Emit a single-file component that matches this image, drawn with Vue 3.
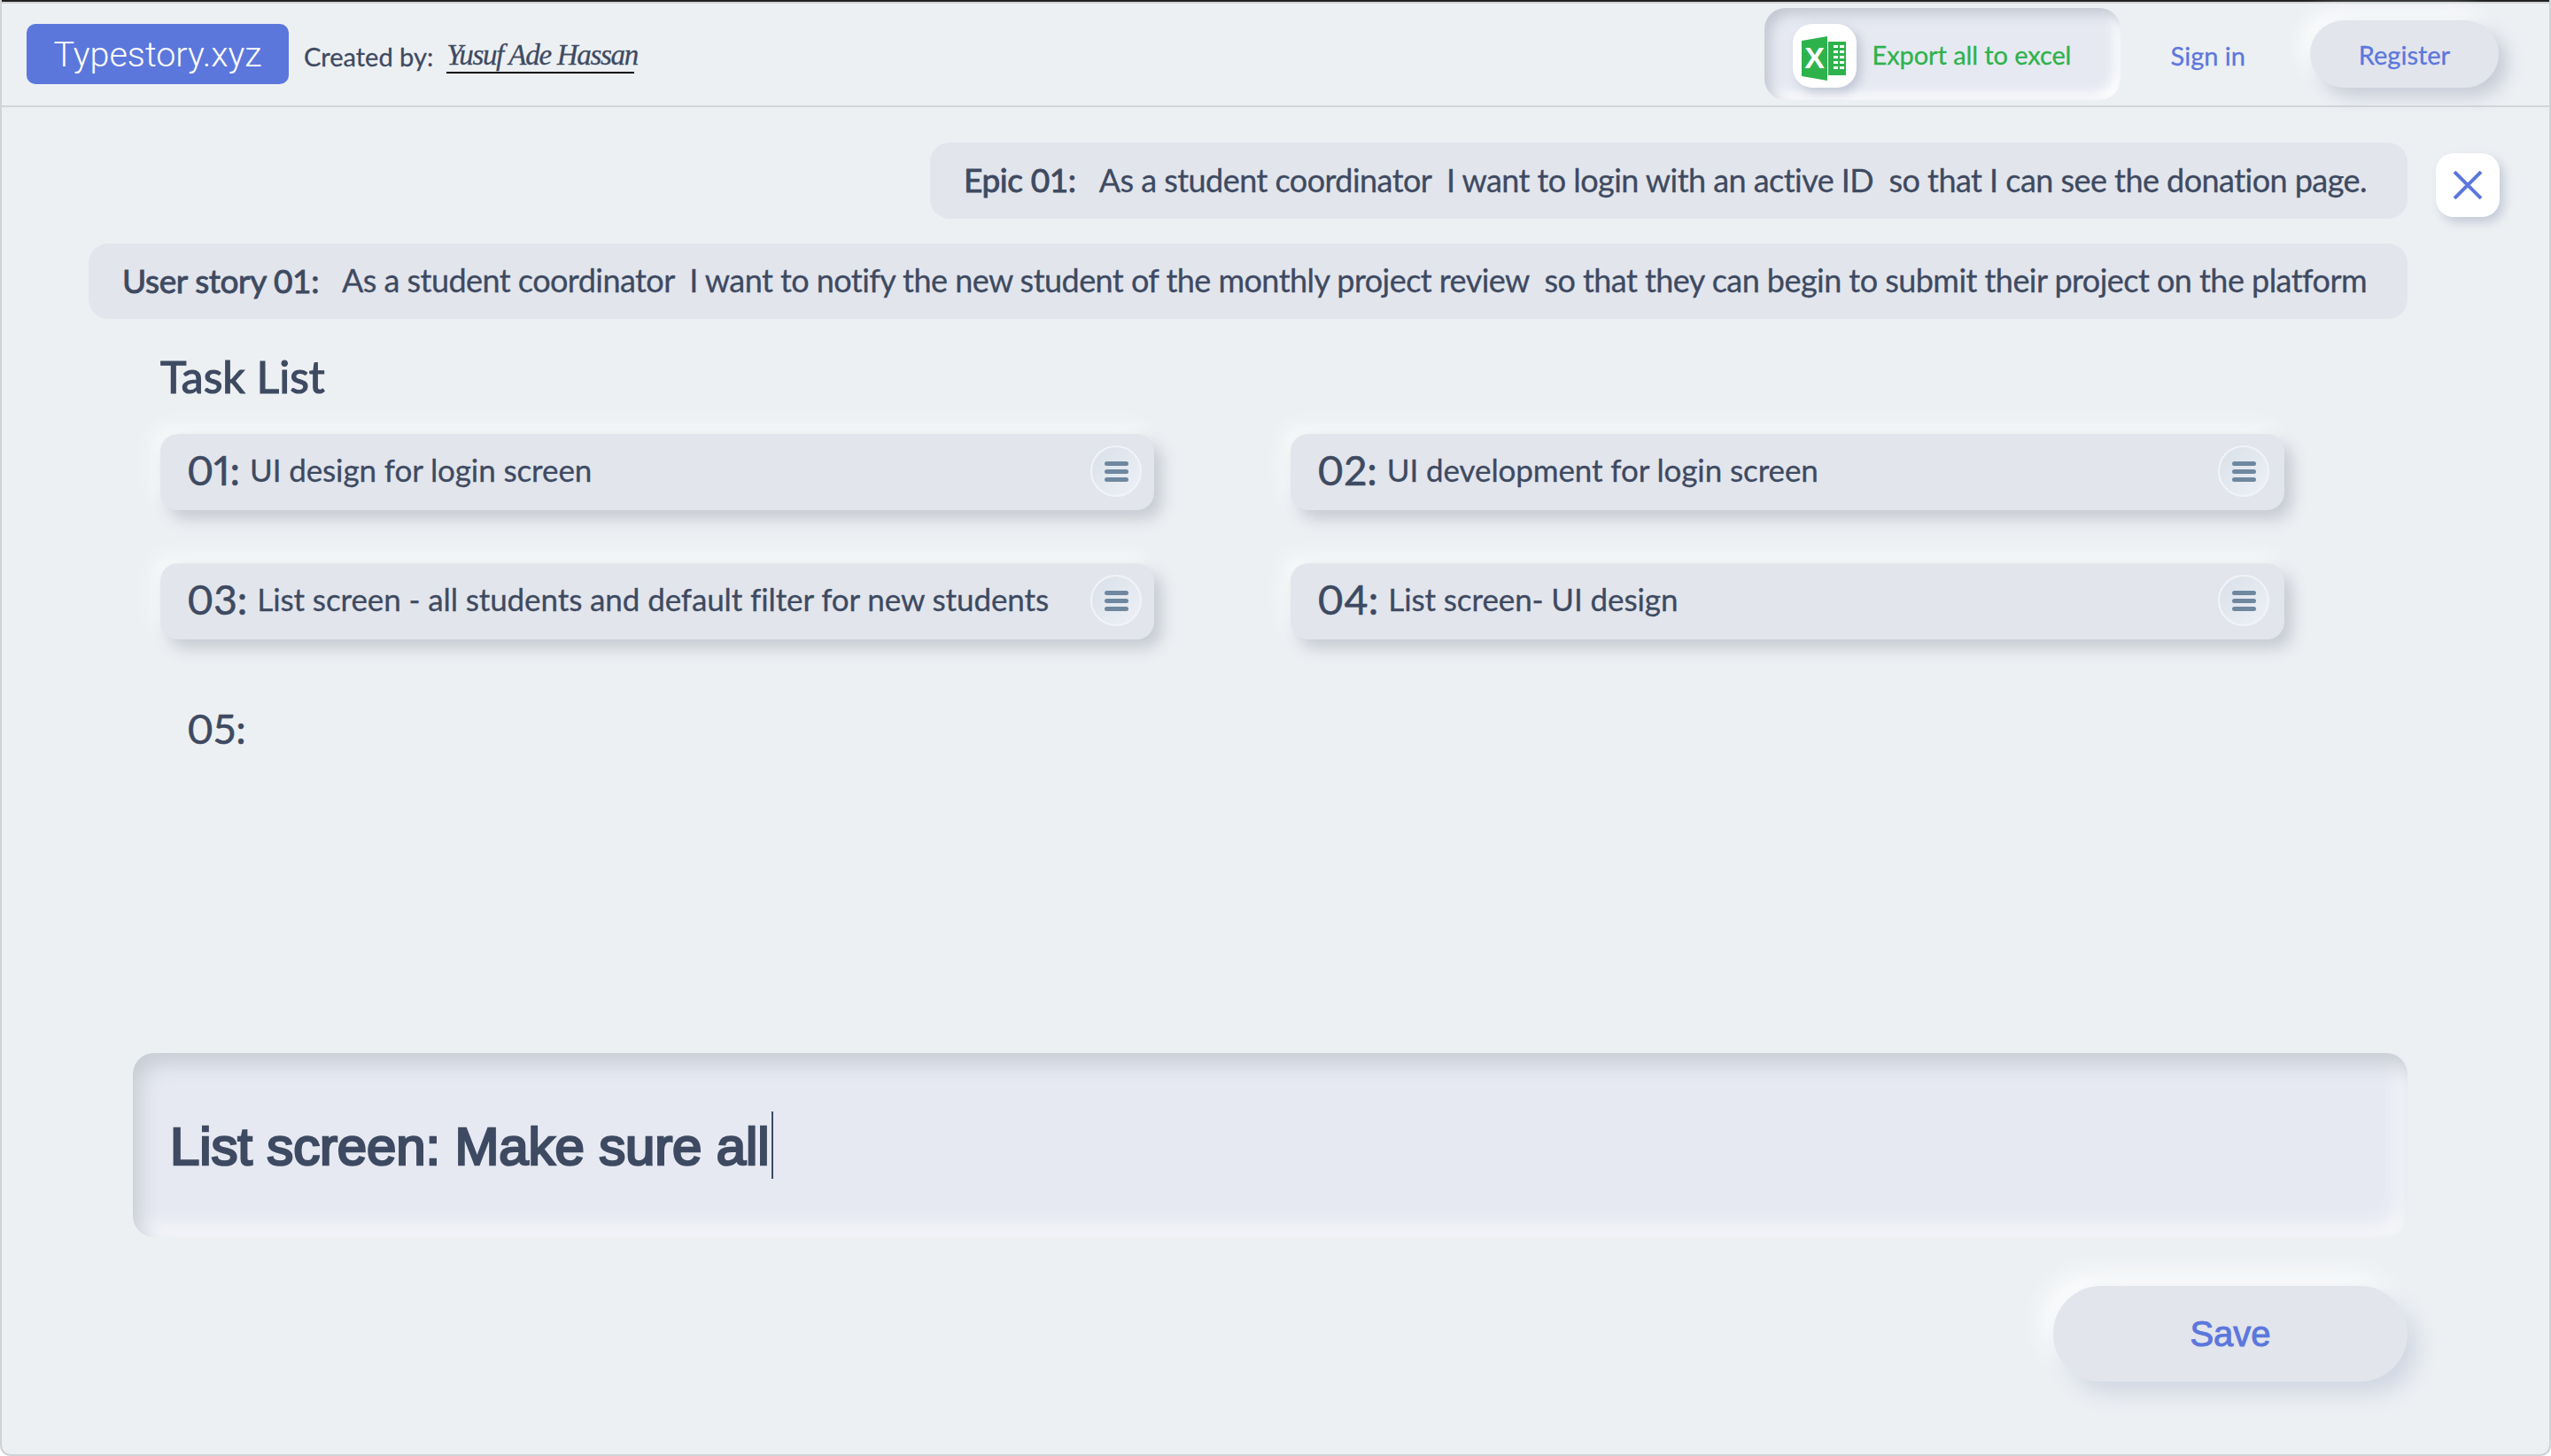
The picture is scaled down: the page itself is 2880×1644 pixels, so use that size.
<script setup>
const epic = 'As a student coordinator\u00a0\u00a0I want to login with an active ID\u00a0\u00a0so that I can see the donation page.'
const story = 'As a student coordinator\u00a0\u00a0I want to notify the new student of the monthly project review\u00a0\u00a0so that they can begin to submit their project on the platform'
const tasks = [
  { n: '01:', t: 'UI design for login screen' },
  { n: '02:', t: 'UI development for login screen' },
  { n: '03:', t: 'List screen - all students and default filter for new students' },
  { n: '04:', t: 'List screen- UI design' },
]
</script>

<template>
  <div class="window">
    <header class="head">
      <div class="logo">Typestory.xyz</div>
      <span class="created">Created by:</span>
      <span class="author">Yusuf Ade Hassan</span>
      <div class="export">
        <div class="tile">
          <svg width="72" height="72" viewBox="0 0 72 72">
            <rect x="40" y="20" width="20" height="38" fill="#2eb24c" />
            <g fill="#fff">
              <rect x="46" y="24" width="5" height="3" /><rect x="53" y="24" width="5" height="3" />
              <rect x="46" y="30" width="5" height="3" /><rect x="53" y="30" width="5" height="3" />
              <rect x="46" y="36" width="5" height="3" /><rect x="53" y="36" width="5" height="3" />
              <rect x="46" y="42" width="5" height="3" /><rect x="53" y="42" width="5" height="3" />
              <rect x="46" y="48" width="5" height="3" /><rect x="53" y="48" width="5" height="3" />
            </g>
            <polygon points="10,19 39,14 39,64 10,59" fill="#2eb24c" />
            <text x="24.5" y="50" text-anchor="middle" class="xl">X</text>
          </svg>
        </div>
        <span class="export-label">Export all to excel</span>
      </div>
      <a class="signin">Sign in</a>
      <button class="register">Register</button>
    </header>

    <main class="main">
      <div class="epic-row">
        <div class="bar epic"><b>Epic 01:</b><span>{{ epic }}</span></div>
        <button class="close" aria-label="Close">
          <svg width="34" height="32" viewBox="0 0 34 32"><path d="M2 1 32 31M32 1 2 31" stroke="#5c77dc" stroke-width="4" fill="none" /></svg>
        </button>
      </div>
      <div class="bar story"><b>User story 01:</b><span>{{ story }}</span></div>

      <section class="tasks">
        <h2>Task List</h2>
        <div class="grid">
          <div v-for="task in tasks" :key="task.n" class="card">
            <span class="num">{{ task.n }}</span>
            <span class="text">{{ task.t }}</span>
            <button class="menu" aria-label="Menu"><i></i><i></i><i></i></button>
          </div>
          <div class="card empty"><span class="num">05:</span></div>
        </div>
      </section>

      <div class="input"><span>List screen: Make sure all</span><i class="caret"></i></div>
      <div class="actions"><button class="save">Save</button></div>
    </main>
  </div>
</template>

<style>
html, body { margin: 0; background: #fff; }
</style>

<style scoped>
.window {
  box-sizing: border-box;
  width: 2880px;
  height: 1644px;
  background: #edf0f3;
  border: 2px solid #d0d3d6;
  border-top: 0;
  border-radius: 0 0 12px 12px;
  box-shadow: inset 0 2px 0 #222, inset 0 4px 0 #d0d3d6;
  font-family: Lato, "Liberation Sans", sans-serif;
  color: #3e4a61;
  overflow: hidden;
  -webkit-text-stroke: 0.3px currentColor;
}
button { font: inherit; border: 0; padding: 0; }
.head {
  box-sizing: border-box;
  height: 121px;
  border-bottom: 2px solid #d2d5d8;
  display: flex;
  align-items: flex-start;
  padding-left: 28px;
}
.logo {
  width: 296px;
  height: 68px;
  margin-top: 27px;
  border-radius: 10px;
  background: #5c77dc;
  color: #fff;
  font-family: Roboto, sans-serif;
  font-weight: 300;
  font-size: 39.5px;
  line-height: 70px;
  text-align: center;
  -webkit-text-stroke: 0;
}
.created { margin: 45px 0 0 17px; font-size: 29px; line-height: 38px; }
.author {
  margin: 44px 0 0 15px;
  width: 212px;
  height: 37px;
  font-family: "Liberation Serif", serif;
  font-style: italic;
  font-size: 33px;
  letter-spacing: -1.3px;
  line-height: 37px;
  border-bottom: 2px solid #000;
  white-space: nowrap;
}
.export {
  box-sizing: border-box;
  width: 402px;
  height: 104px;
  margin: 9px 0 0 auto;
  padding: 18px 0 0 32px;
  display: flex;
  border-radius: 24px;
  background: #e6e9f2;
  box-shadow: inset 7px 7px 14px #c4c8d2, inset -7px -7px 14px #fff;
}
.tile {
  width: 72px;
  height: 72px;
  border-radius: 22px;
  background: #fff;
  box-shadow: 5px 5px 12px #c0c6d4;
}
.xl { font: bold 34px "Liberation Sans", sans-serif; fill: #fff; stroke: none; }
.export-label { margin: 16px 0 0 18px; color: #2eb24c; font-size: 29px; line-height: 38px; white-space: nowrap; letter-spacing: -0.1px; }
.signin { margin: 44px 0 0 57px; color: #5c77dc; font-size: 29px; line-height: 38px; }
.register {
  width: 213px;
  height: 76px;
  margin: 23px 57px 0 73px;
  border-radius: 38px;
  background: #e2e5ec;
  color: #5c77dc;
  font-size: 29px;
  box-shadow: 10px 10px 20px #c6cbd6, -10px -10px 20px #fbfcfd;
}
.main { padding: 0 0 0 98px; }
.bar {
  box-sizing: border-box;
  display: flex;
  gap: 26px;
  align-items: center;
  justify-content: flex-end;
  padding-bottom: 3px;
  border-radius: 22px;
  background: #e2e5ec;
  font-size: 36px;
  letter-spacing: -0.55px;
  white-space: nowrap;
}
.bar b { font-weight: 400; font-size: 37px; letter-spacing: -0.4px; -webkit-text-stroke: 0.9px currentColor; }
.epic-row { display: flex; align-items: flex-start; margin-top: 40px; }
.epic { width: 1668px; height: 86px; margin-left: 950px; padding-right: 46px; }
.close {
  width: 72px;
  height: 72px;
  margin: 12px 0 0 32px;
  border-radius: 20px;
  background: #fff;
  box-shadow: 5px 6px 12px #c4cbd8;
  display: flex;
  align-items: center;
  justify-content: center;
}
.story { width: 2618px; height: 85px; margin-top: 28px; padding-right: 46px; }
.tasks { padding-left: 81px; }
h2 { margin: 36px 0 0; font-size: 50px; line-height: 58px; font-weight: 400; -webkit-text-stroke: 1.2px currentColor; }
.grid {
  display: grid;
  grid-template-columns: 1122px 1122px;
  column-gap: 154px;
  row-gap: 60px;
  margin-top: 36px;
}
.card {
  box-sizing: border-box;
  height: 86px;
  display: flex;
  align-items: center;
  padding: 0 14px 2px 30px;
  border-radius: 20px;
  background: #e2e5ec;
  box-shadow: 9px 10px 18px #c6cad2, -9px -10px 18px #f6f8f9;
}
.card:nth-child(2n) { padding-right: 17px; }
.card.empty { background: none; box-shadow: none; }
.num { font-size: 46px; margin: 0 11px 4px 0; font-variant-numeric: proportional-nums; -webkit-text-stroke: 0.6px currentColor; }
.text { font-size: 35px; margin-bottom: 4px; white-space: nowrap; letter-spacing: -0.1px; }
.menu {
  box-sizing: border-box;
  width: 58px;
  height: 58px;
  margin-left: auto;
  border-radius: 50%;
  border: 2px solid #f1f4f7;
  background: linear-gradient(135deg, #d9e0e9, #eef1f6);
  display: flex;
  flex-direction: column;
  align-items: center;
  justify-content: center;
  gap: 4px;
}
.menu i { display: block; width: 27px; height: 5px; border-radius: 3px; background: #6f879f; }
.input {
  box-sizing: border-box;
  width: 2568px;
  height: 208px;
  margin: 321px 0 0 50px;
  padding-left: 42px;
  display: flex;
  align-items: center;
  border-radius: 24px;
  background: #e6e9f2;
  box-shadow: inset 8px 12px 22px #c8ccd4, inset -10px -12px 22px #f8f9fb;
  font-family: "Liberation Sans", sans-serif;
  font-size: 60px;
  letter-spacing: -0.15px;
  -webkit-text-stroke: 2.6px currentColor;
}
.input span { margin-top: 2px; }
.caret { width: 2px; height: 76px; margin-left: 3px; background: #3e4a61; }
.actions { display: flex; justify-content: flex-end; width: 2618px; margin-top: 55px; }
.save {
  width: 400px;
  height: 108px;
  border-radius: 54px;
  background: #e2e5ec;
  color: #5c77dc;
  font-family: "Liberation Sans", sans-serif;
  font-size: 40px;
  -webkit-text-stroke: 1px currentColor;
  box-shadow: 12px 14px 26px #d0d7e3, -12px -14px 26px #fbfcfd;
}
</style>
